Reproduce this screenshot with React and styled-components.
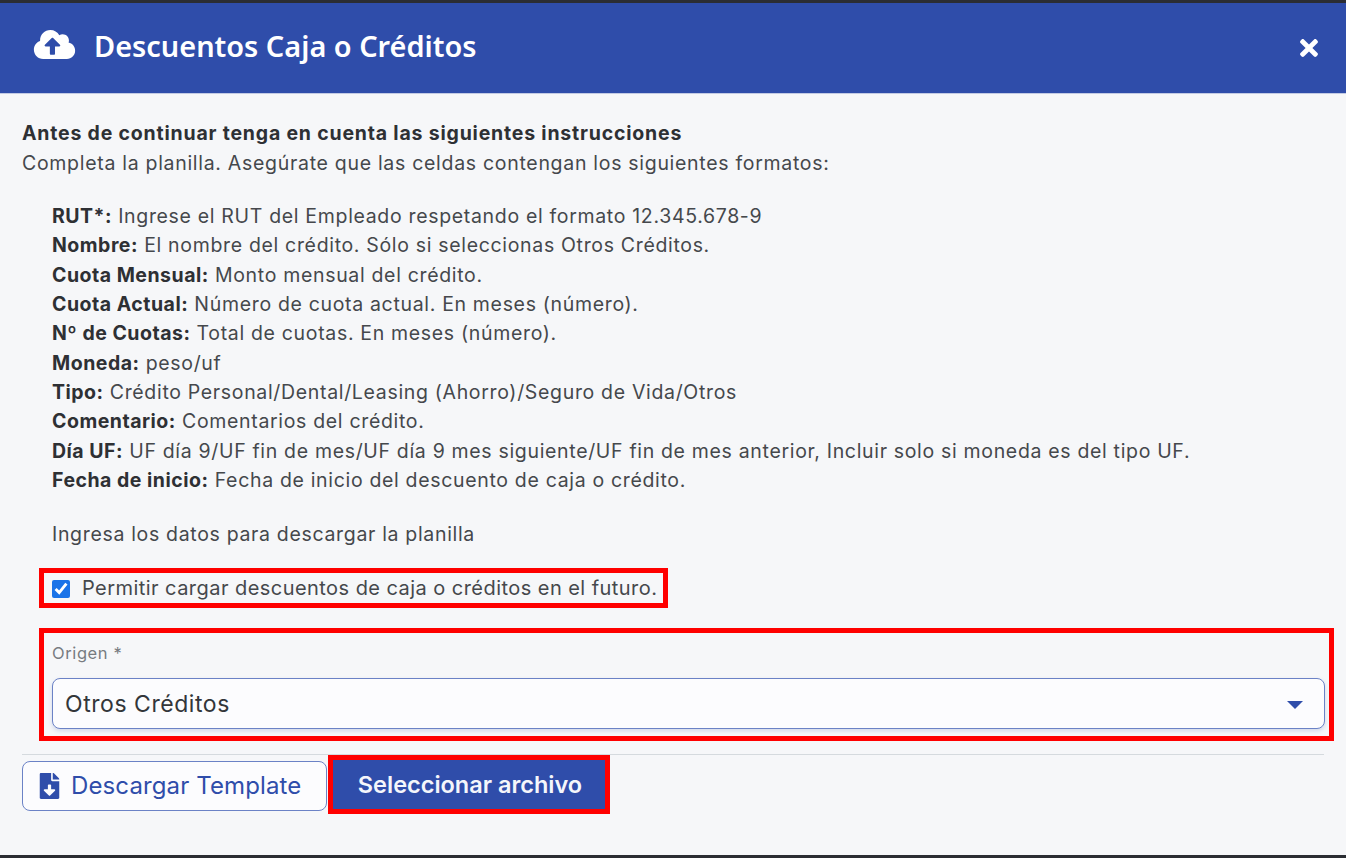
import React from 'react';
import styled, { createGlobalStyle } from 'styled-components';
import { FaCloudUploadAlt, FaFileDownload, FaTimes } from 'react-icons/fa';

const GlobalStyle = createGlobalStyle`
html, body {
  margin: 0;
  padding: 0;
  background: #2b2d33;
}
`

const Modal = styled.div`
width: 1346px;
height: 852px;
margin-top: 3px;
background: #f6f7f9;
font-family: Inter, "Liberation Sans", sans-serif;
color: #45484c;
overflow: hidden;
`
const Header = styled.div`
height: 91px;
background: #2f4daa;
border-bottom: 1px solid #c3cbe4;
box-sizing: border-box;
display: flex;
align-items: center;
padding: 0 24px 4px 33px;
color: #fff;
`
const HeaderIcon = styled(FaCloudUploadAlt)`
width: 43px;
height: 33px;
margin-bottom: 3px;
`
const Title = styled.h1`
flex: 1;
margin: 0 0 1px 18px;
font-family: "Noto Sans", sans-serif;
font-size: 28.9px;
font-weight: 600;
line-height: 36px;
`
const Close = styled(FaTimes)`
width: 26px;
height: 26px;
margin-top: 3px;
`
const Body = styled.div`
padding: 24px 22px 0;
font-size: 19.5px;
letter-spacing: 0.67px;
`
const Lead = styled.div`
font-weight: 700;
line-height: 30px;
color: #2e3034;
letter-spacing: 0.8px;
`
const Sub = styled.div`
line-height: 30px;
letter-spacing: 0.7px;
`
const List = styled.div`
margin: 24px 0 0 30px;
`
const Line = styled.div`
line-height: 29.35px;
b {
  font-weight: 700;
  color: #2e3034;
  letter-spacing: 0.5px;
}
`
const Hint = styled.div`
margin: 24px 0 0 30px;
line-height: 30px;
`
const CheckFrame = styled.label`
display: flex;
align-items: center;
gap: 12px;
box-sizing: border-box;
width: fit-content;
height: 40px;
margin: 19px 0 0 17px;
padding: 0 6px 0 8px;
border: 5px solid #ff0000;
font-size: 20px;
letter-spacing: 0.45px;
`
const Check = styled.input`
width: 18px;
height: 18px;
margin: 2px 0 0;
accent-color: #1a73e8;
`
const OriginFrame = styled.div`
box-sizing: border-box;
width: 1295px;
height: 113px;
margin: 20px 0 0 17px;
padding: 8px 4px 0 8px;
border: 5px solid #ff0000;
`
const FieldLabel = styled.div`
font-size: 16.5px;
letter-spacing: 0.6px;
line-height: 24px;
color: #787c81;
`
const SelectBox = styled.div`
display: flex;
align-items: center;
justify-content: space-between;
box-sizing: border-box;
height: 51px;
margin-top: 13px;
padding: 0 21px 0 12px;
background: #fcfcfe;
border: 1px solid #6b82c6;
border-radius: 8px;
box-shadow: 0 2px 4px rgba(47, 77, 170, 0.18);
font-size: 23px;
letter-spacing: 0.55px;
color: #33363a;
`
const Caret = styled.span`
width: 0;
height: 0;
margin-top: 2px;
border-left: 8px solid transparent;
border-right: 8px solid transparent;
border-top: 8px solid #2f4daa;
`
const Divider = styled.div`
height: 1px;
margin-top: 13px;
background: #d5dade;
`
const Footer = styled.div`
display: flex;
align-items: center;
margin-top: 0;
`
const OutlineButton = styled.button`
display: flex;
align-items: center;
gap: 11px;
box-sizing: border-box;
width: 305px;
height: 50px;
margin-top: 2px;
padding: 0 0 0 16px;
background: #fcfcfe;
border: 1px solid #6b82c6;
border-radius: 8px;
font-family: inherit;
font-size: 24px;
letter-spacing: 0.12px;
color: #2f4daa;
`
const FileIcon = styled(FaFileDownload)`
width: 21px;
height: 26px;
`
const PrimaryFrame = styled.div`
box-sizing: border-box;
width: 282px;
height: 59px;
margin-left: 1px;
border: 5px solid #ff0000;
`
const PrimaryButton = styled.button`
display: block;
width: 100%;
height: 100%;
padding: 0 0 0 2px;
background: #2f4daa;
border: 0;
font-family: inherit;
font-size: 23.5px;
font-weight: 600;
color: #f4f6fb;
`

const fields = [
  ['RUT*:', 'Ingrese el RUT del Empleado respetando el formato 12.345.678-9'],
  ['Nombre:', 'El nombre del crédito. Sólo si seleccionas Otros Créditos.'],
  ['Cuota Mensual:', 'Monto mensual del crédito.'],
  ['Cuota Actual:', 'Número de cuota actual. En meses (número).'],
  ['Nº de Cuotas:', 'Total de cuotas. En meses (número).'],
  ['Moneda:', 'peso/uf'],
  ['Tipo:', 'Crédito Personal/Dental/Leasing (Ahorro)/Seguro de Vida/Otros'],
  ['Comentario:', 'Comentarios del crédito.'],
  ['Día UF:', 'UF día 9/UF fin de mes/UF día 9 mes siguiente/UF fin de mes anterior, Incluir solo si moneda es del tipo UF.'],
  ['Fecha de inicio:', 'Fecha de inicio del descuento de caja o crédito.'],
];

export default function App() {
  return (
    <>
      <GlobalStyle />
      <Modal>
        <Header>
          <HeaderIcon />
          <Title>Descuentos Caja o Créditos</Title>
          <Close />
        </Header>
        <Body>
          <Lead>Antes de continuar tenga en cuenta las siguientes instrucciones</Lead>
          <Sub>Completa la planilla. Asegúrate que las celdas contengan los siguientes formatos:</Sub>
          <List>
            {fields.map(([name, text]) => (
              <Line key={name}><b>{name}</b> {text}</Line>
            ))}
          </List>
          <Hint>Ingresa los datos para descargar la planilla</Hint>
          <CheckFrame>
            <Check type="checkbox" defaultChecked />
            Permitir cargar descuentos de caja o créditos en el futuro.
          </CheckFrame>
          <OriginFrame>
            <FieldLabel>Origen *</FieldLabel>
            <SelectBox>
              Otros Créditos
              <Caret />
            </SelectBox>
          </OriginFrame>
          <Divider />
          <Footer>
            <OutlineButton><FileIcon />Descargar Template</OutlineButton>
            <PrimaryFrame>
              <PrimaryButton>Seleccionar archivo</PrimaryButton>
            </PrimaryFrame>
          </Footer>
        </Body>
      </Modal>
    </>
  );
}
